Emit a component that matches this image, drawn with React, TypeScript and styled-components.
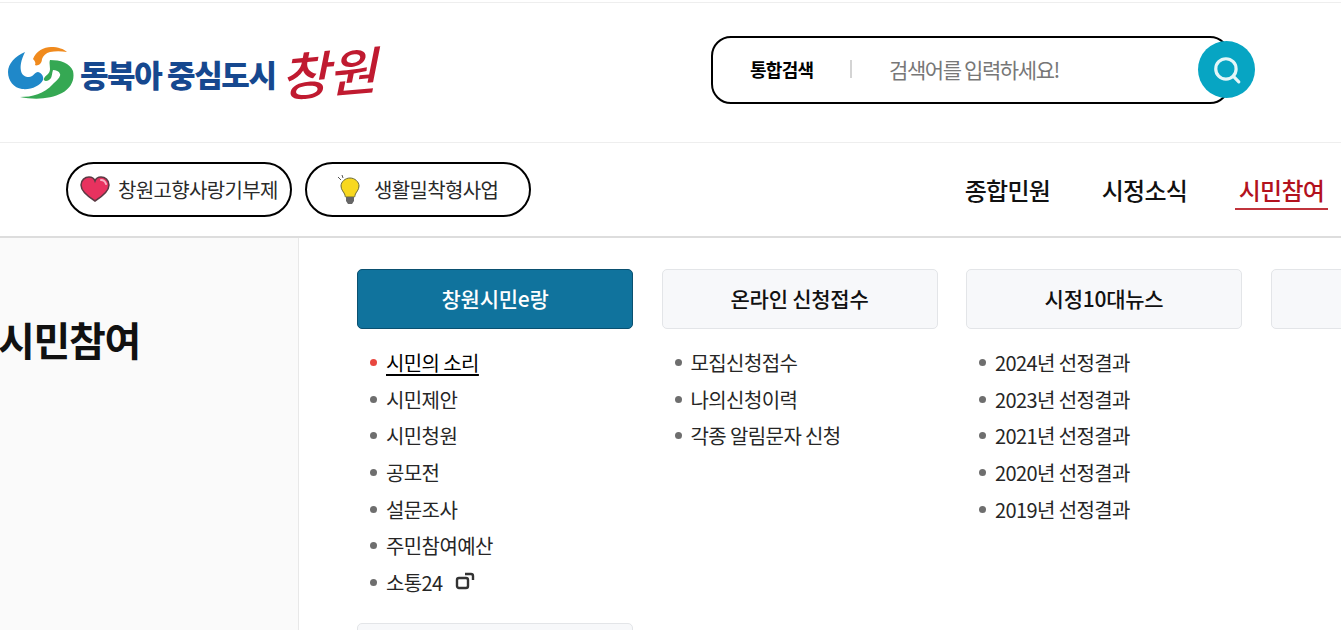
import React from "react";
import styled, { createGlobalStyle } from "styled-components";

const Global = createGlobalStyle`
  html, body { margin: 0; padding: 0; background: #fff; overflow: hidden; }
  body { font-family: "Noto Sans CJK KR", "Noto Sans", sans-serif; width: 1341px; height: 630px; }
  * { box-sizing: border-box; }
`;

const Page = styled.div`
  width: 1341px;
  height: 630px;
  overflow: hidden;
  border-top: 1px solid #eee;
  margin-top: 2px;
`;

const Header = styled.header`
  height: 140px;
  border-bottom: 1px solid #eee;
  display: flex;
  align-items: flex-start;
  padding: 33px 0 0 8px;
`;

const Logo = styled.div`
  width: 703px;
  flex: none;
  height: 68px;
  display: flex;
  align-items: center;
  padding-top: 7px;
`;

const LogoText = styled.span`
  margin-left: 6px;
  font-size: 31px;
  font-weight: 900;
  color: #16488f;
  letter-spacing: -1.4px;
  white-space: nowrap;
  line-height: 1;
`;

const LogoBrush = styled.span`
  margin-left: 10px;
  font-size: 52px;
  font-weight: 500;
  color: #c01a30;
  letter-spacing: -1px;
  transform: skewX(-16deg) rotate(-5deg) translateY(-3px);
  line-height: 1;
  white-space: nowrap;
`;

const SearchWrap = styled.form`
  position: relative;
  width: 545px;
  height: 68px;
  margin: 0;
`;

const SearchBox = styled.div`
  width: 519px;
  height: 68px;
  border: 2px solid #000;
  border-radius: 20px;
  display: flex;
  align-items: center;
  padding-left: 37px;
  padding-bottom: 2px;
`;

const SearchLabel = styled.span`
  font-size: 18px;
  font-weight: 700;
  letter-spacing: -0.7px;
  color: #000;
  width: 65px;
  white-space: nowrap;
`;

const Divider = styled.span`
  width: 2px;
  height: 18px;
  background: #d4d4d4;
  margin-left: 35px;
`;

const Placeholder = styled.span`
  margin-left: 37px;
  font-size: 21px;
  letter-spacing: -1.4px;
  color: #777;
  white-space: nowrap;
`;

const SearchButton = styled.button`
  position: absolute;
  left: 487px;
  top: 5px;
  width: 57px;
  height: 57px;
  border: 0;
  border-radius: 50%;
  background: #07a5c3;
  display: flex;
  align-items: center;
  justify-content: center;
  padding: 0;
`;

const NavRow = styled.nav`
  height: 95px;
  border-bottom: 2px solid #ddd;
  display: flex;
  align-items: flex-start;
  padding: 19px 13px 0 66px;
`;

const Pill = styled.a<{ $w: number; $gap: number; $pad: number }>`
  width: ${(p) => p.$w}px;
  height: 55px;
  border: 2px solid #000;
  border-radius: 28px;
  display: flex;
  align-items: center;
  gap: ${(p) => p.$gap}px;
  padding-left: ${(p) => p.$pad}px;
  margin-right: 13px;
  font-size: 20px;
  letter-spacing: -0.65px;
  color: #2a2a2a;
  white-space: nowrap;
`;

const MainMenu = styled.div`
  margin-left: auto;
  display: flex;
  gap: 44px;
  padding-top: 11px;
`;

const MainItem = styled.a<{ $on?: boolean }>`
  height: 37px;
  width: 93px;
  text-align: center;
  font-size: 24px;
  line-height: 33px;
  font-weight: 500;
  letter-spacing: -0.7px;
  white-space: nowrap;
  color: ${(p) => (p.$on ? "#b3121d" : "#111")};
  border-bottom: 2px solid ${(p) => (p.$on ? "#c0343c" : "transparent")};
`;

const Body = styled.div`
  display: flex;
  height: 393px;
`;

const Side = styled.aside`
  width: 299px;
  flex: none;
  background: #fafafa;
  border-right: 1px solid #e8e8e8;
  padding-top: 73px;
`;

const Title = styled.h2`
  margin: 0 0 0 -2px;
  font-size: 40px;
  line-height: 56px;
  font-weight: 700;
  letter-spacing: -1.3px;
  color: #111;
  white-space: nowrap;
`;

const Grid = styled.div`
  flex: none;
  display: grid;
  grid-template-columns: repeat(4, 276px);
  column-gap: 28.5px;
  padding: 31px 0 0 58px;
  align-items: start;
`;

const Column = styled.section`
  min-height: 355px;
`;

const CardHead = styled.div<{ $on?: boolean }>`
  height: 60px;
  border-radius: 5px;
  border: 1px solid ${(p) => (p.$on ? "#0a5070" : "#e3e5e8")};
  background: ${(p) => (p.$on ? "#10739d" : "#f7f8fa")};
  color: ${(p) => (p.$on ? "#fff" : "#111")};
  font-size: 21px;
  font-weight: 500;
  letter-spacing: -0.25px;
  padding-bottom: 2px;
  display: flex;
  align-items: center;
  justify-content: center;
  white-space: nowrap;
`;

const List = styled.ul`
  list-style: none;
  margin: 15.4px 0 0;
  padding: 0 0 0 13px;
`;

const Item = styled.li<{ $on?: boolean }>`
  height: 36.6px;
  display: flex;
  align-items: center;
  font-size: 20px;
  letter-spacing: -0.6px;
  color: ${(p) => (p.$on ? "#000" : "#262626")};
  white-space: nowrap;
  &::before {
    content: "";
    width: 7px;
    height: 7px;
    border-radius: 50%;
    background: ${(p) => (p.$on ? "#e8463f" : "#6e6e6e")};
    margin-right: 9px;
    flex: none;
  }
`;

const ItemLabel = styled.span<{ $on?: boolean }>`
  text-decoration: ${(p) => (p.$on ? "underline" : "none")};
  text-underline-offset: 3px;
  text-decoration-thickness: 2px;
`;

const External = styled.svg`
  margin-left: 12px;
  margin-top: -3px;
`;

const NextCard = styled.div`
  grid-column: 1;
  height: 60px;
  border-radius: 5px;
  border: 1px solid #e3e5e8;
  background: #f7f8fa;
  margin-top: -1px;
`;

const LogoMark = () => (
  <svg width="66" height="54" viewBox="0 0 66 54">
    <path d="M25 12C28 4 36 0 43 0c7 0 13 2 16 5-6-1-12-1-17 0-4 1-7 4-8 7 0 2-1 4-2 5-1 1-4 2-5 1 1-2 0-4-2-6z" fill="#f08a1d" />
    <path d="M17 5C7 9 0 17 0 25c0 9 6 16 14 17 9 1 18-3 21-9 1-3-1-7-5-8-3 0-5 5-9 5-4 0-7-2-8-6-1-5 0-11 4-19z" fill="#1f88c9" />
    <path d="M42 13c10 0 20 3 23 11 2 9-2 17-11 22-11 6-27 7-42 4 12 0 24-3 33-13 5-4 8-8 7-10-1-3-4-4-7-4-1 3-1 6-2 8-2 3-6 4-7 2-1-2 2-4 4-6 1-1 2-3 2-5 0-3-1-6 0-9z" fill="#35a853" />
  </svg>
);

const Heart = () => (
  <svg width="30" height="27" viewBox="0 0 30 27">
    <path d="M15 25C7 20 1 15 1 9c0-5 4-8 8-8 3 0 5 1 6 4 1-3 3-4 6-4 4 0 8 3 8 8 0 6-6 11-14 16z" fill="#e8325f" stroke="#5b3a44" strokeWidth="1.5" />
    <path d="M21 4c2 0 4 1 5 4" stroke="#f9b2c4" strokeWidth="2" fill="none" strokeLinecap="round" />
  </svg>
);

const Bulb = () => (
  <svg width="23" height="29" viewBox="0 0 23 29">
    <path d="M1 2l3 3M5 0l1 3" stroke="#555" strokeWidth="1" />
    <path d="M13 3C8 3 4 7 4 11c0 4 3 6 4 9 0 1 0 2 1 2h8c1 0 1-1 1-2 1-3 4-5 4-9 0-4-4-8-9-8z" fill="#f8d81f" stroke="#6a6a3a" strokeWidth="1" />
    <path d="M9 22h8v4l-2 3h-4l-2-3z" fill="#666" />
  </svg>
);

const cols = [
  { head: "창원시민e랑", on: true, items: ["시민의 소리", "시민제안", "시민청원", "공모전", "설문조사", "주민참여예산", "소통24"] },
  { head: "온라인 신청접수", items: ["모집신청접수", "나의신청이력", "각종 알림문자 신청"] },
  { head: "시정10대뉴스", items: ["2024년 선정결과", "2023년 선정결과", "2021년 선정결과", "2020년 선정결과", "2019년 선정결과"] },
  { head: "", items: [] as string[] },
];

export default function App() {
  return (
    <Page>
      <Global />
      <Header>
        <Logo>
          <LogoMark />
          <LogoText>동북아 중심도시</LogoText>
          <LogoBrush>창원</LogoBrush>
        </Logo>
        <SearchWrap>
          <SearchBox>
            <SearchLabel>통합검색</SearchLabel>
            <Divider />
            <Placeholder>검색어를 입력하세요!</Placeholder>
          </SearchBox>
          <SearchButton type="button" aria-label="검색">
            <svg width="30" height="30" viewBox="0 0 28 28" fill="none" stroke="#e4f6f8" strokeWidth="3">
              <circle cx="13" cy="13" r="9.5" />
              <path d="M20 20l5 5" strokeLinecap="round" />
            </svg>
          </SearchButton>
        </SearchWrap>
      </Header>
      <NavRow>
        <Pill $w={226} $gap={8} $pad={12}>
          <Heart />
          창원고향사랑기부제
        </Pill>
        <Pill $w={226} $gap={14} $pad={30}>
          <Bulb />
          생활밀착형사업
        </Pill>
        <MainMenu>
          <MainItem>종합민원</MainItem>
          <MainItem>시정소식</MainItem>
          <MainItem $on>시민참여</MainItem>
        </MainMenu>
      </NavRow>
      <Body>
        <Side>
          <Title>시민참여</Title>
        </Side>
        <Grid>
          {cols.map((c, i) => (
            <Column key={i}>
              <CardHead $on={c.on}>{c.head}</CardHead>
              <List>
                {c.items.map((t, j) => {
                  const on = c.on && j === 0;
                  return (
                    <Item key={t} $on={on}>
                      <ItemLabel $on={on}>{t}</ItemLabel>
                      {t === "소통24" && (
                        <External width="20" height="18" viewBox="0 0 20 18" fill="none" stroke="#333" strokeWidth="2.4">
                          <rect x="2" y="6" width="11" height="10" rx="2" />
                          <path d="M10 2h6c1 0 2 1 2 2v4" />
                        </External>
                      )}
                    </Item>
                  );
                })}
              </List>
            </Column>
          ))}
          <NextCard />
        </Grid>
      </Body>
    </Page>
  );
}
